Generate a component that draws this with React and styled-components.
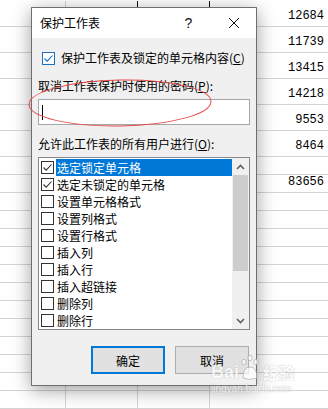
import React from "react";
import styled, { createGlobalStyle } from "styled-components";

const Global = createGlobalStyle`
  html, body { margin: 0; padding: 0; background: #fff; }
  body { width: 328px; height: 409px; overflow: hidden; position: relative; }
  #root { position: relative; width: 328px; height: 409px; }
`;

const UI_FONT = `"Noto Sans CJK SC", "Microsoft YaHei", sans-serif`;

/* ---------- spreadsheet background ---------- */
const Sheet = styled.div`
  display: flex;
  flex-direction: column;
  width: 328px;
  height: 409px;
  overflow: hidden;
  padding-top: 1px;
  box-sizing: border-box;
`;

const Row = styled.div`
  display: grid;
  grid-template-columns: 66px 72px 72px 1fr;
  height: ${(p) => p.$h}px;
  flex: none;
  border-bottom: 1px solid #d4d4d4;
  box-sizing: border-box;
`;

const Cell = styled.div`
  border-right: 1px solid ${(p) => (p.$dark ? "#111" : "#d4d4d4")};
  box-sizing: border-box;
`;

const NumCell = styled.div`
  display: flex;
  align-items: flex-end;
  justify-content: flex-end;
  padding: 0 4px 3px 0;
  font-family: "Liberation Mono", "DejaVu Sans Mono", monospace;
  font-size: 12px;
  line-height: 14px;
  color: #000;
`;

/* ---------- dialog ---------- */
const Dialog = styled.div`
  position: absolute;
  left: 31px;
  top: 7px;
  width: 226px;
  height: 379px;
  box-sizing: border-box;
  border: 1px solid #6f6f6f;
  background: #f0f0f0;
  box-shadow: 0 4px 18px rgba(0, 0, 0, 0.38);
  display: flex;
  flex-direction: column;
  font-family: ${UI_FONT};
  font-size: 12px;
  color: #000;
`;

const TitleBar = styled.div`
  height: 30px;
  background: #fff;
  display: flex;
  align-items: center;
  flex: none;
`;

const Title = styled.div`
  flex: 1;
  padding-left: 8px;
  font-size: 12px;
  line-height: 16px;
`;

const TitleButton = styled.div`
  width: 45px;
  height: 30px;
  display: flex;
  align-items: center;
  justify-content: center;
  font-family: "Liberation Sans", Arial, sans-serif;
  font-size: 14px;
  color: #111;
`;

const Body = styled.div`
  flex: 1;
  display: flex;
  flex-direction: column;
  padding: 12px 6px 0 6px;
`;

const CheckRow = styled.label`
  display: flex;
  align-items: center;
  gap: 6px;
  height: 16px;
  line-height: 16px;
  padding-left: 4px;
`;

const Box = styled.span`
  width: 13px;
  height: 13px;
  box-sizing: border-box;
  border: 1px solid ${(p) => p.$color};
  background: #fff;
  display: flex;
  align-items: center;
  justify-content: center;
  flex: none;
`;

const Label = styled.div`
  height: 16px;
  line-height: 16px;
  margin-top: ${(p) => p.$mt}px;
`;

const U = styled.span`
  text-decoration: underline;
  text-underline-offset: 1px;
`;

const Input = styled.div`
  margin-top: 5px;
  height: 26px;
  box-sizing: border-box;
  border: 1px solid #a6a6a6;
  background: #fff;
  display: flex;
  align-items: center;
  padding-left: 3px;
`;

const Caret = styled.span`
  width: 1px;
  height: 15px;
  background: #000;
`;

const ListBox = styled.div`
  margin-top: 5px;
  height: 173px;
  box-sizing: border-box;
  border: 1px solid #828790;
  background: #fff;
  display: flex;
`;

const Items = styled.div`
  flex: 1;
  display: flex;
  flex-direction: column;
  padding: 1px 0 0 2px;
`;

const Item = styled.div`
  height: 17px;
  display: flex;
  align-items: center;
  gap: 2px;
`;

const ItemText = styled.span`
  flex: 1;
  height: 17px;
  line-height: 17px;
  padding-left: 1px;
  background: ${(p) => (p.$selected ? "#0078d7" : "transparent")};
  color: ${(p) => (p.$selected ? "#fff" : "#000")};
`;

const ScrollBar = styled.div`
  width: 17px;
  background: #f0f0f0;
  display: flex;
  flex-direction: column;
  align-items: center;
`;

const Arrow = styled.div`
  height: 17px;
  width: 17px;
  display: flex;
  align-items: center;
  justify-content: center;
  flex: none;
`;

const Track = styled.div`
  flex: 1;
  width: 17px;
  display: flex;
  justify-content: center;
`;

const Thumb = styled.div`
  width: 15px;
  height: ${(p) => p.$h}px;
  background: #cdcdcd;
`;

const Buttons = styled.div`
  margin-top: 16px;
  display: flex;
  justify-content: flex-end;
  gap: 10px;
  padding-right: 1px;
`;

const Button = styled.div`
  width: 74px;
  height: 28px;
  box-sizing: border-box;
  border: ${(p) => (p.$primary ? "2px solid #0078d7" : "1px solid #adadad")};
  background: #e1e1e1;
  display: flex;
  align-items: center;
  justify-content: center;
  font-size: 12px;
`;

/* ---------- overlays ---------- */
const Overlay = styled.svg`
  position: absolute;
  left: 0;
  top: 0;
  pointer-events: none;
`;

const Watermark = styled.div`
  position: absolute;
  left: 211px;
  top: 351px;
  display: flex;
  flex-direction: column;
  align-items: flex-start;
  pointer-events: none;
  opacity: 0.7;
`;

const WmMain = styled.div`
  display: flex;
  align-items: flex-end;
  height: 30px;
`;

const WmText = styled.span`
  font-family: "Liberation Sans", Arial, sans-serif;
  font-weight: bold;
  font-size: 18px;
  line-height: 18px;
  color: #fff;
  text-shadow: 0 0 1px #b0b0b0, 0 0 1px #b0b0b0;
`;

const WmCn = styled(WmText)`
  font-family: ${UI_FONT};
  font-size: 16px;
  margin-left: 2px;
`;

const WmSub = styled.div`
  font-family: "Liberation Sans", Arial, sans-serif;
  font-size: 10px;
  line-height: 12px;
  margin-top: 2px;
  color: #fff;
  text-shadow: 0 0 1px #b0b0b0, 0 0 1px #b0b0b0;
`;

const Check = ({ color }) => (
  <svg width="11" height="11" viewBox="0 0 11 11">
    <path d="M1.5 5.5 L4.2 8.2 L9.5 2.5" fill="none" stroke={color} strokeWidth="1.1" />
  </svg>
);

const Chevron = ({ up }) => (
  <svg width="9" height="6" viewBox="0 0 9 6">
    <path
      d={up ? "M1 5 L4.5 1.5 L8 5" : "M1 1 L4.5 4.5 L8 1"}
      fill="none"
      stroke="#606060"
      strokeWidth="1.6"
    />
  </svg>
);

const numbers = ["12684", "11739", "13415", "14218", "9553", "8464", "", "83656"];

const rows = [];
for (let i = 0; i < 6; i++) rows.push({ h: 26, num: numbers[i], dark: true });
rows.push({ h: 18, num: "", dark: true });
rows.push({ h: 18, num: numbers[7], dark: true });
for (let i = 0; i < 14; i++) rows.push({ h: 18, num: "", dark: false });

const items = [
  { t: "选定锁定单元格", c: true, s: true },
  { t: "选定未锁定的单元格", c: true },
  { t: "设置单元格格式" },
  { t: "设置列格式" },
  { t: "设置行格式" },
  { t: "插入列" },
  { t: "插入行" },
  { t: "插入超链接" },
  { t: "删除列" },
  { t: "删除行" },
];

export default function App() {
  return (
    <>
      <Global />
      <Sheet>
        {rows.map((r, i) => (
          <Row key={i} $h={r.h}>
            <Cell />
            <Cell $dark={r.dark} />
            <Cell $dark={r.dark} />
            <NumCell>{r.num}</NumCell>
          </Row>
        ))}
      </Sheet>

      <Dialog>
        <TitleBar>
          <Title>保护工作表</Title>
          <TitleButton>?</TitleButton>
          <TitleButton>
            <svg width="12" height="12" viewBox="0 0 12 12">
              <path d="M1 1 L11 11 M11 1 L1 11" stroke="#111" strokeWidth="1" />
            </svg>
          </TitleButton>
        </TitleBar>
        <Body>
          <CheckRow>
            <Box $color="#1f6fc0">
              <Check color="#0a6fd0" />
            </Box>
            <span>
              保护工作表及锁定的单元格内容(<U>C</U>)
            </span>
          </CheckRow>
          <Label $mt={12}>
            取消工作表保护时使用的密码(<U>P</U>):
          </Label>
          <Input>
            <Caret />
          </Input>
          <Label $mt={11}>
            允许此工作表的所有用户进行(<U>O</U>):
          </Label>
          <ListBox>
            <Items>
              {items.map((it, i) => (
                <Item key={i}>
                  <Box $color="#333">{it.c && <Check color="#333" />}</Box>
                  <ItemText $selected={it.s}>{it.t}</ItemText>
                </Item>
              ))}
            </Items>
            <ScrollBar>
              <Arrow>
                <Chevron up />
              </Arrow>
              <Track>
                <Thumb $h={96} />
              </Track>
              <Arrow>
                <Chevron />
              </Arrow>
            </ScrollBar>
          </ListBox>
          <Buttons>
            <Button $primary>确定</Button>
            <Button>取消</Button>
          </Buttons>
        </Body>
      </Dialog>

      <Overlay width="328" height="409" viewBox="0 0 328 409">
        <ellipse
          cx="120"
          cy="103"
          rx="91"
          ry="23"
          fill="none"
          stroke="#e84a4a"
          strokeWidth="1"
          transform="rotate(-1 120 103)"
        />
      </Overlay>

      <Watermark>
        <WmMain>
          <WmText>Bai</WmText>
          <svg width="22" height="28" viewBox="0 0 22 28">
            <g fill="#fff" stroke="#b0b0b0" strokeWidth="1">
              <ellipse cx="5" cy="9" rx="2.2" ry="2.8" />
              <ellipse cx="11" cy="5" rx="2.2" ry="2.8" />
              <ellipse cx="17" cy="9" rx="2.2" ry="2.8" />
              <path d="M4 25 Q4 14 11 14 Q18 14 18 25 Q11 28 4 25 Z" />
            </g>
          </svg>
          <WmCn>经验</WmCn>
        </WmMain>
        <WmSub>jingyan.baidu.com</WmSub>
      </Watermark>
    </>
  );
}
